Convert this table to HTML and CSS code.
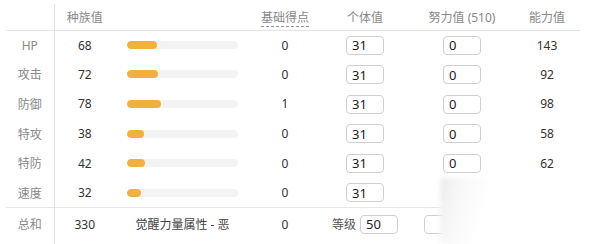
FILE: index.html
```html
<!DOCTYPE html>
<html lang="zh-CN">
<head>
  <meta charset="UTF-8">
  <title>能力值计算</title>
  <link rel="stylesheet" href="styles.css">
</head>
<body>
  <div class="stats">
    <table class="stat-table">
      <colgroup>
        <col class="c-name"><col class="c-base"><col class="c-bar"><col class="c-pt">
        <col class="c-iv"><col class="c-ev"><col class="c-val">
      </colgroup>
      <thead>
        <tr>
          <th class="name"></th>
          <th>种族值</th>
          <th></th>
          <th><span class="hint">基础得点</span></th>
          <th>个体值</th>
          <th>努力值 (510)</th>
          <th>能力值</th>
        </tr>
      </thead>
      <tbody>
        <tr>
          <td class="name">HP</td><td class="num">68</td>
          <td><div class="bar"><div class="fill" style="width:26.7%"></div></div></td>
          <td class="num">0</td>
          <td><input class="box" value="31"></td>
          <td><input class="box" value="0"></td>
          <td class="num">143</td>
        </tr>
        <tr>
          <td class="name">攻击</td><td class="num">72</td>
          <td><div class="bar"><div class="fill" style="width:28.2%"></div></div></td>
          <td class="num">0</td>
          <td><input class="box" value="31"></td>
          <td><input class="box" value="0"></td>
          <td class="num">92</td>
        </tr>
        <tr>
          <td class="name">防御</td><td class="num">78</td>
          <td><div class="bar"><div class="fill" style="width:30.6%"></div></div></td>
          <td class="num">1</td>
          <td><input class="box" value="31"></td>
          <td><input class="box" value="0"></td>
          <td class="num">98</td>
        </tr>
        <tr>
          <td class="name">特攻</td><td class="num">38</td>
          <td><div class="bar"><div class="fill" style="width:14.9%"></div></div></td>
          <td class="num">0</td>
          <td><input class="box" value="31"></td>
          <td><input class="box" value="0"></td>
          <td class="num">58</td>
        </tr>
        <tr>
          <td class="name">特防</td><td class="num">42</td>
          <td><div class="bar"><div class="fill" style="width:16.5%"></div></div></td>
          <td class="num">0</td>
          <td><input class="box" value="31"></td>
          <td><input class="box" value="0"></td>
          <td class="num">62</td>
        </tr>
        <tr>
          <td class="name">速度</td><td class="num">32</td>
          <td><div class="bar"><div class="fill" style="width:12.5%"></div></div></td>
          <td class="num">0</td>
          <td><input class="box" value="31"></td>
          <td><input class="box" value="0"></td>
          <td class="num">57</td>
        </tr>
      </tbody>
      <tfoot>
        <tr>
          <td class="name">总和</td><td class="num">330</td>
          <td class="hidden-power">觉醒力量属性 - 恶</td>
          <td class="num">0</td>
          <td><span class="lv-label">等级</span><input class="box" value="50"></td>
          <td class="ev-left"><input class="box wide" value=""></td>
          <td></td>
        </tr>
      </tfoot>
    </table>
    <div class="cover"></div>
  </div>
</body>
</html>
```

FILE: styles.css
```css
* {
  box-sizing: border-box;
}
body {
  margin: 0;
  background: #fff;
  font-family: "Noto Sans", "Noto Sans CJK SC", sans-serif;
  font-size: 12px;
  color: #333;
}
.stats {
  position: relative;
  width: 600px;
  height: 244px;
  overflow: hidden;
  padding: 4px 0 0 6px;
}
.stat-table {
  border-collapse: collapse;
  table-layout: fixed;
  width: 574px;
}
.c-name { width: 48px; }
.c-base { width: 61px; }
.c-bar { width: 135px; }
.c-pt { width: 70px; }
.c-iv { width: 90px; }
.c-ev { width: 104px; }
.c-val { width: 66px; }

.stat-table th,
.stat-table td {
  padding: 0;
  text-align: center;
  vertical-align: middle;
  font-weight: normal;
  white-space: nowrap;
}
.stat-table th {
  height: 26px;
  color: #888;
  border-bottom: 1px solid #e6e6e6;
}
.stat-table tbody td {
  height: 29.6px;
}
.stat-table tfoot td {
  height: 37px;
  border-top: 1px solid #e6e6e6;
  padding-bottom: 4px;
}
.stat-table .name {
  color: #888;
  border-right: 1px solid #e3e3e3;
  padding-right: 0;
}
.num {
  color: #333;
}
.hint {
  border-bottom: 1px dashed #999;
  padding-bottom: 0;
}
.bar {
  margin: 0 12px;
  height: 8px;
  border-radius: 4px;
  background: #f3f3f3;
  overflow: hidden;
}
.fill {
  height: 100%;
  border-radius: 4px;
  background: #f0b23c;
}
.box {
  width: 38px;
  height: 19px;
  padding: 0 5px;
  border: 1px solid #cfcfcf;
  border-radius: 4px;
  font-family: "Noto Sans", sans-serif;
  font-size: 13px;
  color: #222;
  background: #fff;
  vertical-align: middle;
  outline: none;
}
.box.wide {
  width: 76px;
}
.lv-label {
  color: #555;
  margin-right: 4px;
  vertical-align: middle;
}
.hidden-power {
  color: #444;
}
/* white panel sitting over the lower right corner */
.cover {
  position: absolute;
  left: 440px;
  top: 178px;
  width: 160px;
  height: 66px;
  background: linear-gradient(105deg, #ececec 0%, #f7f7f7 12%, #fff 30%);
  filter: blur(2px);
}
```
